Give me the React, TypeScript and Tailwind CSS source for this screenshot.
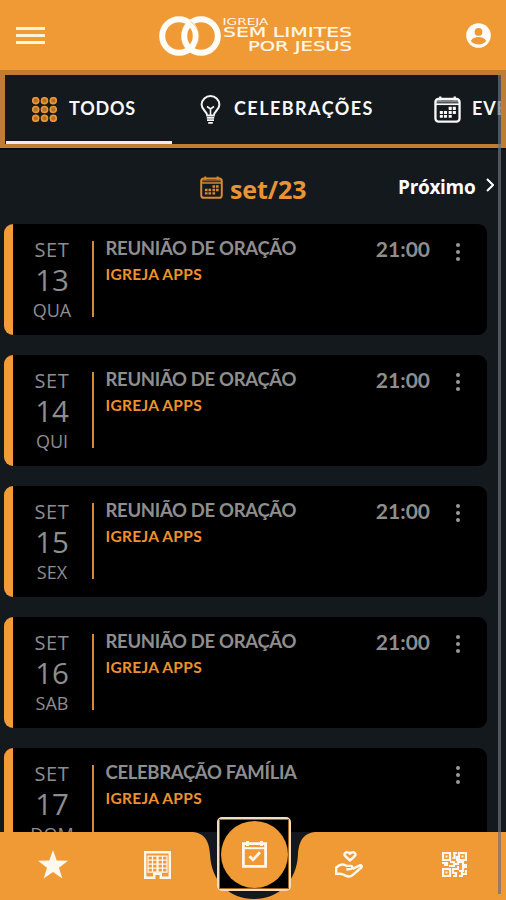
import type { ReactNode } from "react";

interface EventData {
  month: string;
  day: string;
  weekday: string;
  title: string;
  place: string;
  time?: string;
}

const events: EventData[] = [
  { month: "SET", day: "13", weekday: "QUA", title: "REUNIÃO DE ORAÇÃO", place: "IGREJA APPS", time: "21:00" },
  { month: "SET", day: "14", weekday: "QUI", title: "REUNIÃO DE ORAÇÃO", place: "IGREJA APPS", time: "21:00" },
  { month: "SET", day: "15", weekday: "SEX", title: "REUNIÃO DE ORAÇÃO", place: "IGREJA APPS", time: "21:00" },
  { month: "SET", day: "16", weekday: "SAB", title: "REUNIÃO DE ORAÇÃO", place: "IGREJA APPS", time: "21:00" },
  { month: "SET", day: "17", weekday: "DOM", title: "CELEBRAÇÃO FAMÍLIA", place: "IGREJA APPS" },
];

function Logo() {
  return (
    <svg
      className="h-[42px] w-[196px]"
      viewBox="0 0 196 42"
      fill="#fff8ea"
      fontFamily="'DejaVu Sans', sans-serif"
    >
      <g fill="none" stroke="#fffdf8" strokeWidth="6">
        <circle cx="20" cy="22" r="16.8" />
        <circle cx="42" cy="22" r="16.8" />
      </g>
      <path d="M31.5 7.5a19 19 0 0 1 8.5 14.5a19 19 0 0 1-3 10" fill="none" stroke="#f3b46a" strokeWidth="0.8" />
      <text x="63.5" y="10.5" fontSize="9.5" textLength="46" lengthAdjust="spacingAndGlyphs">
        IGREJA
      </text>
      <text x="64" y="22.8" fontSize="14.5" textLength="129" lengthAdjust="spacingAndGlyphs" stroke="#fff8ea" strokeWidth="0.2">
        SEM LIMITES
      </text>
      <text x="89" y="36.5" fontSize="14.5" textLength="104" lengthAdjust="spacingAndGlyphs" stroke="#fff8ea" strokeWidth="0.2">
        POR JESUS
      </text>
    </svg>
  );
}

function Header() {
  return (
    <header className="flex h-[70px] shrink-0 items-center justify-between bg-[#f09a36] pl-4 pr-[15px]">
      <button type="button" aria-label="Menu" className="flex w-[29px] flex-col gap-1">
        <span className="h-[3px] bg-[#fff3d8]" />
        <span className="h-[3px] bg-[#fff3d8]" />
        <span className="h-[3px] bg-[#fff3d8]" />
      </button>
      <div className="ml-[3px]">
        <Logo />
      </div>
      <button type="button" aria-label="Perfil">
        <svg className="size-[25px]" viewBox="0 0 25 25">
          <circle cx="12.5" cy="12.5" r="12.3" fill="#fffdfa" />
          <circle cx="12.5" cy="8.9" r="3.9" fill="#ef9836" />
          <path d="M4.8 17.7c1.8-2.7 4.7-3.7 7.7-3.7s5.9 1 7.7 3.7c-1.8 2.5-4.5 3.8-7.7 3.8s-5.9-1.3-7.7-3.8z" fill="#ef9836" />
        </svg>
      </button>
    </header>
  );
}

function CalendarIcon({ className }: { className?: string }) {
  return (
    <svg className={className} viewBox="0 0 28 28" fill="none" stroke="currentColor" strokeWidth="2.4">
      <rect x="1.5" y="3" width="25" height="23.5" rx="3.2" />
      <path d="M2 5.5h24" strokeWidth="2.5" opacity="0.5" />
      <path d="M2 8.5h24" strokeWidth="1.8" />
      <path d="M6.5.5v4M21.5.5v4" strokeWidth="2.4" />
      <g fill="currentColor" stroke="none">
        <path d="M15.2 11.2h3.2v3.2h-3.2zM19.5 11.2h3.2v3.2h-3.2zM6 15.5h3.2v3.2H6zM10.3 15.5h3.2v3.2h-3.2zM15.2 15.5h3.2v3.2h-3.2zM19.5 15.5h3.2v3.2h-3.2zM6 19.8h3.2v2.8H6zM10.3 19.8h3.2v2.8h-3.2zM15.2 19.8h3.2v2.8h-3.2z" />
      </g>
    </svg>
  );
}

function GridIcon() {
  const dots = [3.7, 12.5, 21.3];

  return (
    <svg className="size-[25px]" viewBox="0 0 25 25">
      {dots.map((y) =>
        dots.map((x) => (
          <circle
            key={`${x}-${y}`}
            cx={x}
            cy={y}
            r="3"
            fill="#b96f20"
            stroke="#e89537"
            strokeWidth="1.7"
          />
        )),
      )}
    </svg>
  );
}

function BulbIcon() {
  return (
    <svg className="h-[29px] w-[21px]" viewBox="0 0 21 29" fill="none" stroke="#f4f4f4" strokeWidth="2">
      <path d="M7.2 20.5c0-4-5.6-5.3-5.6-11A8.9 8.9 0 0 1 10.5 1a8.9 8.9 0 0 1 8.9 8.5c0 5.7-5.6 7-5.6 11z" />
      <path d="M10.5 20v-7M7 11.5l3.5 2.5 3.5-2.5" strokeWidth="1.6" />
      <path d="M6.8 22.8h7.4M7 25.2h7M8.2 27.8h4.6" strokeWidth="1.8" />
    </svg>
  );
}

function Tabs() {
  return (
    <div className="h-[78px] shrink-0 overflow-hidden border-x-[5px] border-b-4 border-t-[5px] border-[#c17c33] bg-[#14191d] font-['Lato',sans-serif] text-[18px] font-bold text-[#f8f8f8]">
      <div className="flex h-full w-[640px]">
        <div className="ml-px flex h-full w-[166px] items-center gap-3 border-b-[3px] border-[#f5e9ef] pl-[26px] pt-0.5">
          <GridIcon />
          <span className="-mt-0.5 tracking-[0.8px]">TODOS</span>
        </div>
        <div className="flex h-full items-center gap-[13px] pb-px pl-[28px]">
          <BulbIcon />
          <span className="-mt-0.5 w-[140px] tracking-[1.45px]">CELEBRAÇÕES</span>
        </div>
        <div className="flex h-full items-center gap-[11px] pb-px pl-[60px]">
          <CalendarIcon className="size-[27px]" />
          <span className="-mt-0.5 tracking-[0.8px]">EVENTOS</span>
        </div>
      </div>
    </div>
  );
}

function MonthBar() {
  return (
    <div className="flex h-[76px] shrink-0 items-center border-t-2 border-[#090e16] pl-[200px]">
      <CalendarIcon className="size-[23px] text-[#d98a34]" />
      <span className="ml-[7px] mt-1 w-[78px] font-['Open_Sans',sans-serif] text-[25px] font-bold leading-none tracking-[-0.1px] text-[#e89435]">
        set/23
      </span>
      <button type="button" className="ml-[90px] flex items-center gap-[11px] whitespace-nowrap font-['Open_Sans',sans-serif] text-[19px] font-bold leading-none tracking-[-0.3px] text-white">
        Próximo
        <svg className="mb-[5px] h-3.5 w-2" viewBox="0 0 8 14" fill="none" stroke="white" strokeWidth="2">
          <path d="m1 1 6 6-6 6" />
        </svg>
      </button>
    </div>
  );
}

function EventCard({ event }: { event: EventData }) {
  return (
    <article className="flex h-[111px] shrink-0 overflow-hidden rounded-[9px] border-l-[9px] border-[#f39c37] bg-black text-[#8e8e8e]">
      <div className="flex w-[78px] flex-col items-center pt-3 font-['Open_Sans',sans-serif]">
        <span className="text-[20px] leading-[27px] tracking-[0.6px]">{event.month}</span>
        <span className="text-[29.5px] leading-[34px]">{event.day}</span>
        <span className="text-[18px] leading-[26px]">{event.weekday}</span>
      </div>
      <div className="ml-px mt-[17px] h-[76px] w-[1.5px] bg-[#d98a31]" />
      <div className="ml-3 flex-1 pt-3 font-['Lato',sans-serif]">
        <h3 className="whitespace-nowrap text-[18.5px] font-bold leading-6 tracking-[-0.32px]">
          {event.title}
        </h3>
        <p className="mt-[5px] text-[15.5px] font-bold leading-[18px] tracking-[0.3px] text-[#f0922b]">
          {event.place}
        </p>
      </div>
      <span className="mr-[26px] mt-3 font-['Lato',sans-serif] text-[21px] font-bold leading-[26px]">
        {event.time}
      </span>
      <button type="button" aria-label="Opções" className="mr-[27px] mt-[18.5px] flex h-[18px] flex-col justify-between">
        <span className="size-1 rounded-full bg-[#999]" />
        <span className="size-1 rounded-full bg-[#999]" />
        <span className="size-1 rounded-full bg-[#999]" />
      </button>
    </article>
  );
}

function NavItem({ label, children }: { label: string; children: ReactNode }) {
  return (
    <button type="button" aria-label={label} className="flex h-full flex-1 items-center justify-center">
      {children}
    </button>
  );
}

function BottomNav() {
  return (
    <nav className="absolute inset-x-0 bottom-0 h-[68px]">
      <svg className="absolute inset-0 h-[68px] w-[506px]" viewBox="0 0 506 68">
        <path d="M190 0H318V68H190z" fill="#14181e" />
        <path
          d="M0 0H190C204 0 209 8 210 22C211 50 230 67 254 67C278 67 297 50 298 22C299 8 304 0 318 0H506V68H0z"
          fill="#f09a36"
        />
      </svg>

      <div className="relative flex h-full px-px pb-[3px] text-[#fff8ef]">
        <NavItem label="Favoritos">
          <svg className="size-[30px]" viewBox="0 0 30 30" fill="currentColor">
            <path d="m15 0 3.7 10.6 11.3.2-9 6.9 3.3 10.8-9.3-6.4-9.3 6.4L9 17.7 0 10.8l11.3-.2z" />
          </svg>
        </NavItem>
        <NavItem label="Igrejas">
          <svg className="h-[28px] w-[27px]" viewBox="0 0 27 28" fill="none" stroke="currentColor">
            <path d="M1.2 1.2h24.6v25.6h-9v-4h-6.6v4h-9z" strokeWidth="2.4" />
            <path d="M4 5.2h19v16H4zM4 9.2h19M4 13.2h19M4 17.2h19M8.5 5v16M18.5 5v16" strokeWidth="1.2" />
            <path d="M13.5 5v16" strokeWidth="2.2" />
          </svg>
        </NavItem>
        <div className="w-[88px]" />
        <NavItem label="Doações">
          <svg className="h-[27px] w-[28px]" viewBox="0 0 28 27" fill="none" stroke="currentColor" strokeWidth="2.4" strokeLinejoin="round">
            <path d="M15 9.5 10.2 5C8.4 2.8 10.6 1 12.4 1.2c1.2.1 2 .7 2.6 1.6.6-.9 1.4-1.5 2.6-1.6 1.8-.2 4 1.6 2.2 3.8z" />
            <path d="M1.2 24v-7.5c3.5-3.2 7.3-4 10.4-1.6h4.3c1.6 0 2.2 2.6.2 3l-4.8.6M17.5 18l7.2-3.6c1.7-.6 2.8.9 1.6 2.1l-8.7 7.6c-3.1 2.7-6.2 1.1-9.4-.6-2.3-1-4.6-.8-6.4-.5" />
          </svg>
        </NavItem>
        <NavItem label="QR Code">
          <svg className="ml-0.5 size-[25px]" viewBox="0 0 25 25" fill="none" stroke="currentColor" strokeWidth="2.2">
            <path d="M1 1h7v7H1zM17 1h7v7h-7zM1 17h7v7H1z" />
            <path d="M3.5 4.5h2M19.5 4.5h2M3.5 20.5h2M11 1h4M12.5 1v5h-2M15 4v5M0 11h5v2H2M8 10h4v4H7M11 12h5v-2h5v3h4M16 14v3h-5v4h3v4M17 19h4v-4h4M20 19v3h5M17 24h4M24 18v3M11 24h3" />
          </svg>
        </NavItem>
      </div>

      <button
        type="button"
        aria-label="Agenda"
        className="absolute left-[217px] top-[-15px] flex h-[74px] w-[74px] items-center justify-center rounded-[5px] border-[2.5px] border-[#f3dcc0] bg-black"
      >
        <span className="flex h-full w-full items-center justify-center border border-[#a6641d]">
          <span className="flex size-[67px] shrink-0 items-center justify-center rounded-full bg-[#f09a36]">
            <svg className="h-[27px] w-[25px]" viewBox="0 0 25 27" fill="none" stroke="#fff8ef">
              <path d="M1.4 2.7h22.2v22.7H1.4z" strokeWidth="2.8" />
              <path d="M1 7.2h23" strokeWidth="2" />
              <path d="M5.5 0v5M19.5 0v5" strokeWidth="3" />
              <path d="m7.5 15.2 3.5 3.6 7-7.5" strokeWidth="2.8" />
            </svg>
          </span>
        </span>
      </button>
    </nav>
  );
}

export default function App() {
  return (
    <main className="relative flex h-[900px] w-[506px] flex-col overflow-hidden bg-[#14191e]">
      <Header />
      <Tabs />
      <MonthBar />
      <section className="flex min-h-0 flex-1 flex-col gap-[19.9px] overflow-hidden pl-1 pr-[19px]">
        {events.map((event) => (
          <EventCard key={event.day} event={event} />
        ))}
      </section>
      <BottomNav />
      <div className="absolute left-[498px] top-[75px] h-[819px] w-[3px] bg-[#6b7079]/70" />
    </main>
  );
}
